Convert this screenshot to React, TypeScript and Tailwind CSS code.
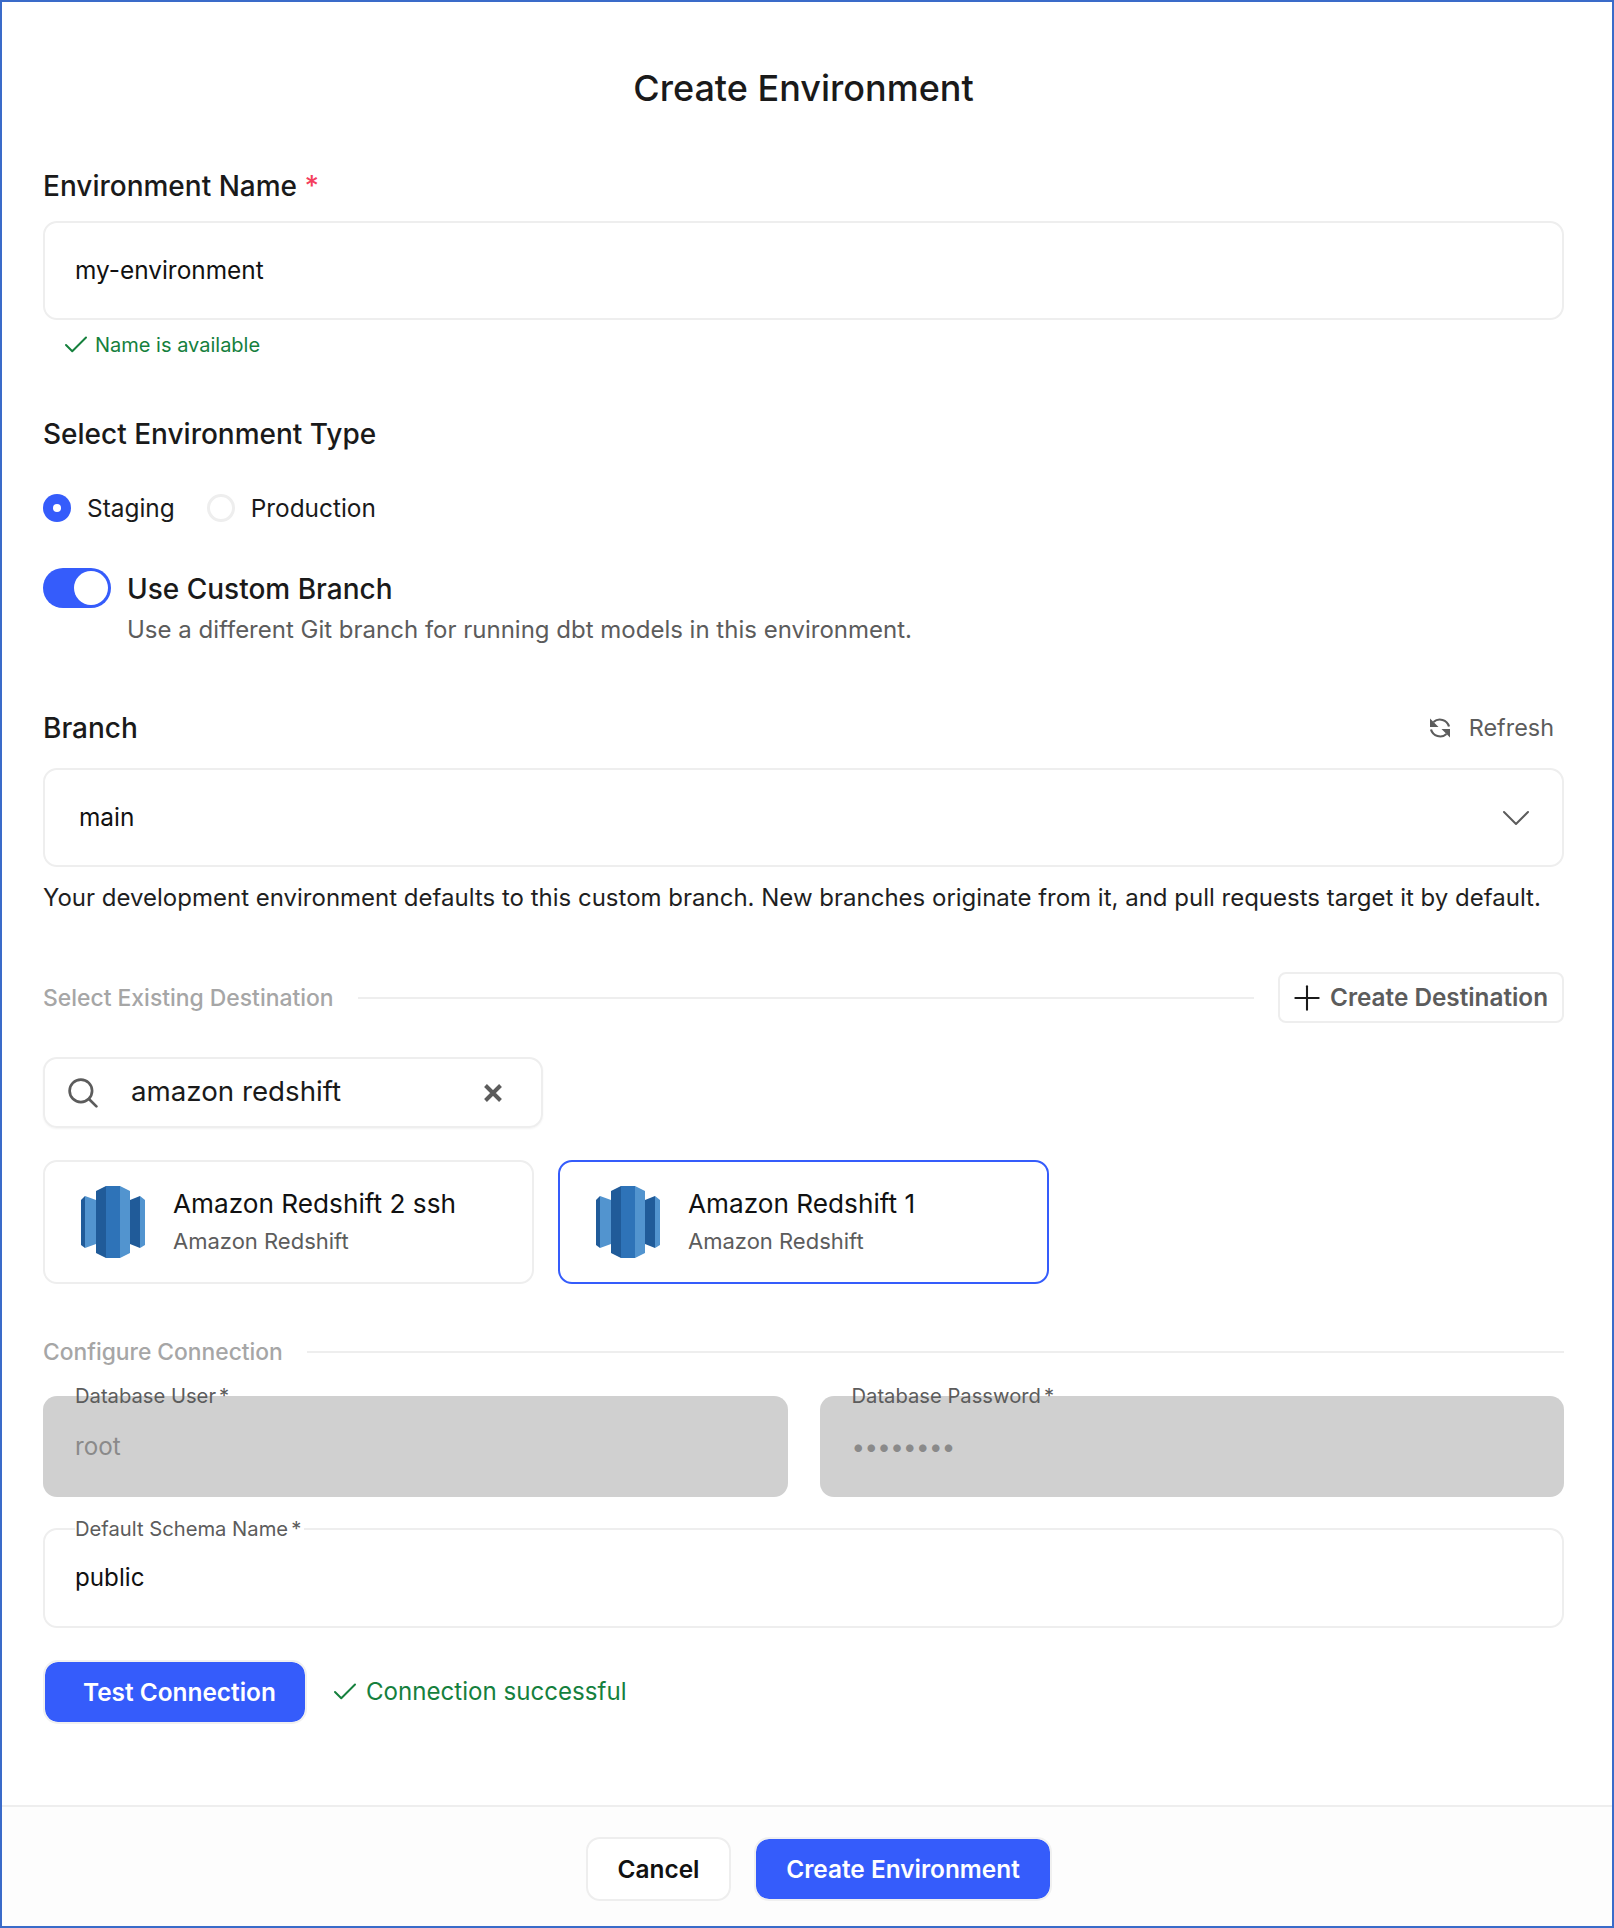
import { Check, ChevronDown, Plus } from "lucide-react";

function RedshiftLogo() {
  return (
    <svg className="h-[72px] w-[66px] shrink-0" viewBox="0 0 64 72">
      <path fill="#205b99" d="M0 14l4-4v52l-4-3z" />
      <path fill="#5294cf" d="M4 10l11 4v44l-11 4z" />
      <path fill="#205b99" d="M15 5l10-5v72l-10-5z" />
      <path fill="#2e73b8" d="M25 0h14v72h-14z" />
      <path fill="#5294cf" d="M39 0l10 5v62l-10 5z" />
      <path fill="#205b99" d="M49 14l10-4v52l-10-4z" />
      <path fill="#5294cf" d="M59 10l5 4v45l-5 3z" />
    </svg>
  );
}

function RefreshIcon() {
  return (
    <svg className="mr-[17px] h-[24px] w-[24px] text-[#5c5c5c]" viewBox="0 0 24 24" fill="none" stroke="currentColor" strokeWidth={2.2}>
      <path d="M21 10.5A9.5 9.5 0 0 0 5.5 6" />
      <path d="M3 13.5A9.5 9.5 0 0 0 18.5 18" />
      <path fill="currentColor" stroke="none" d="M2 2.5v8.5h8.5z" />
      <path fill="currentColor" stroke="none" d="M22 21.5v-8.5h-8.5z" />
    </svg>
  );
}

function SearchIcon() {
  return (
    <svg className="h-[30px] w-[30px] shrink-0 text-[#5c5c5c]" viewBox="0 0 28 28" fill="none" stroke="currentColor" strokeWidth={2.5} strokeLinecap="round">
      <circle cx="12" cy="12" r="10.5" />
      <path d="M20 20l6.5 6.5" />
    </svg>
  );
}

function CloseIcon() {
  return (
    <svg className="h-[30px] w-[30px] shrink-0 text-[#5c5c5c]" viewBox="0 0 24 24" fill="none" stroke="currentColor" strokeWidth={3.2}>
      <path d="M6 6l12 12M18 6L6 18" />
    </svg>
  );
}

function DestinationCard({ name, selected }: { name: string; selected?: boolean }) {
  return (
    <div
      className={
        "flex h-[124px] w-[491px] items-center rounded-[14px] border-2 pl-[35px] " +
        (selected ? "border-[#355cfb]" : "border-[#eeeeee]")
      }
    >
      <RedshiftLogo />
      <div className="ml-[27px] pb-[2px]">
        <div className="text-[26.2px] leading-[36px] text-[#111111]">{name}</div>
        <div className="mt-[3px] text-[22px] leading-[32px] text-[#5c5c5c]">Amazon Redshift</div>
      </div>
    </div>
  );
}

function FloatingField({
  label,
  value,
  disabled,
  className,
  masked,
}: {
  label: string;
  value: string;
  disabled?: boolean;
  className?: string;
  masked?: boolean;
}) {
  return (
    <div
      className={
        "relative flex items-center rounded-[14px] " +
        (disabled ? "bg-[#d0d0d0] pl-[32px] " : "border-2 border-[#eeeeee] pl-[30px] ") +
        className
      }
    >
      <span
        className={
          "absolute text-[20.2px] leading-[24px] text-[#5c5c5c] " +
          (disabled ? "-top-[12px] left-[32px]" : "-top-[13px] left-[30px] bg-white pr-[3px]")
        }
      >
        {label}
        <span className="ml-[3px]">*</span>
      </span>
      {masked ? (
        <span className="text-[24px] leading-[32px] tracking-[-0.6px] text-[#8a8a8a]">••••••••</span>
      ) : (
        <span className={"text-[24.2px] leading-[32px] " + (disabled ? "text-[#8a8a8a]" : "text-[#111111]")}>{value}</span>
      )}
    </div>
  );
}

export default function App() {
  return (
    <div className="flex h-[1928px] w-[1614px] flex-col border-2 border-[#3a6bc9] bg-white font-['Inter',sans-serif]">
      <div className="pt-[64px] pr-[48px] pl-[41px]">
        <h1 className="text-center text-[36px] leading-[44px] font-medium text-[#1a1a1a]">Create Environment</h1>

        <div className="mt-[58px] text-[28px] leading-[36px] font-medium text-[#1a1a1a]">
          Environment Name <span className="text-[#f43f5e]">*</span>
        </div>
        <div className="mt-[17px] flex h-[99px] items-center rounded-[14px] border-2 border-[#eeeeee] pb-[1px] pl-[30px] text-[24.4px] text-[#111111]">
          my-environment
        </div>
        <div className="mt-[11px] flex h-[28px] items-center pl-[18px] text-[20px] text-[#15803d]">
          <Check className="mr-[4px] h-[30px] w-[30px]" strokeWidth={1.6} />
          Name is available
        </div>

        <div className="mt-[57px] text-[28px] leading-[36px] font-medium text-[#1a1a1a]">Select Environment Type</div>
        <div className="mt-[40px] flex h-[32px] items-center text-[24.4px] text-[#1a1a1a]">
          <span className="flex h-[28px] w-[28px] items-center justify-center rounded-full bg-[#355cfb]">
            <span className="h-[8px] w-[8px] rounded-full bg-white" />
          </span>
          <span className="ml-[16px]">Staging</span>
          <span className="ml-[32px] h-[28px] w-[28px] rounded-full border-[3px] border-[#eeeeee]" />
          <span className="ml-[16px]">Production</span>
        </div>

        <div className="mt-[44px] flex items-start">
          <div className="flex h-[40px] w-[68px] items-center justify-end rounded-full bg-[#355cfb] pr-[3px]">
            <span className="h-[34px] w-[34px] rounded-full bg-white" />
          </div>
          <div className="ml-[16px] pt-[3px]">
            <div className="text-[28px] leading-[36px] font-medium text-[#1a1a1a]">Use Custom Branch</div>
            <div className="mt-[7px] text-[24px] leading-[32px] text-[#5c5c5c]">
              Use a different Git branch for running dbt models in this environment.
            </div>
          </div>
        </div>

        <div className="mt-[64px] flex h-[36px] items-center justify-between pr-[10px]">
          <span className="text-[28px] font-medium text-[#1a1a1a]">Branch</span>
          <span className="flex items-center text-[23.4px] text-[#5c5c5c]">
            <RefreshIcon />
            Refresh
          </span>
        </div>
        <div className="mt-[22px] flex h-[99px] items-center justify-between rounded-[14px] border-2 border-[#eeeeee] pr-[22px] pl-[34px] text-[24.4px] text-[#111111]">
          main
          <ChevronDown className="h-[48px] w-[48px] text-[#5c5c5c]" strokeWidth={1} />
        </div>
        <div className="mt-[15px] text-[24px] leading-[32px] text-[#1f1f1f]">
          Your development environment defaults to this custom branch. New branches originate from it, and pull requests target it by default.
        </div>

        <div className="mt-[58px] flex h-[51px] items-center">
          <span className="pt-[1px] text-[22.9px] font-medium text-[#a6a6a6]">Select Existing Destination</span>
          <span className="mx-[24px] h-[2px] flex-1 bg-[#eeeeee]" />
          <button className="flex h-[51px] w-[286px] items-center rounded-[8px] border-2 border-[#eeeeee] pl-[7px] text-[24.3px] font-semibold text-[#5c5c5c]">
            <Plus className="mr-[3px] h-[40px] w-[40px] text-[#1a1a1a]" strokeWidth={1.25} />
            Create Destination
          </button>
        </div>

        <div className="mt-[34px] flex h-[71px] w-[500px] items-center rounded-[14px] border-2 border-[#eeeeee] pr-[33px] pl-[23px] shadow-[0_1px_2px_rgba(0,0,0,0.05)]">
          <SearchIcon />
          <span className="ml-[33px] flex-1 pb-[2px] text-[27.7px] text-[#1a1a1a]">amazon redshift</span>
          <CloseIcon />
        </div>

        <div className="mt-[32px] flex gap-[24px]">
          <DestinationCard name="Amazon Redshift 2 ssh" />
          <DestinationCard name="Amazon Redshift 1" selected />
        </div>

        <div className="mt-[54px] flex h-[28px] items-center">
          <span className="pt-[1px] text-[22.8px] font-medium text-[#a6a6a6]">Configure Connection</span>
          <span className="ml-[24px] h-[2px] flex-1 bg-[#eeeeee]" />
        </div>

        <div className="mt-[30px] grid grid-cols-2 gap-[32px]">
          <FloatingField className="h-[101px]" label="Database User" value="root" disabled />
          <FloatingField className="h-[101px]" label="Database Password" value="" disabled masked />
        </div>
        <FloatingField className="mt-[31px] h-[100px]" label="Default Schema Name" value="public" />

        <div className="mt-[32px] flex items-center">
          <button className="flex h-[64px] w-[264px] items-center rounded-[15px] border-2 border-[#f0f0f0] bg-[#355cfb] bg-clip-padding pl-[38px] text-[24.4px] font-semibold text-white">
            Test Connection
          </button>
          <Check className="mr-[6px] ml-[23px] h-[30px] w-[30px] text-[#15803d]" strokeWidth={1.6} />
          <span className="text-[24.1px] text-[#15803d]">Connection successful</span>
        </div>
      </div>

      <div className="mt-auto flex h-[121px] justify-center gap-[23px] border-t-2 border-[#eeeeee] bg-[#fdfdfd] pt-[30px] pl-[24px]">
        <button className="h-[64px] w-[145px] rounded-[14px] border-2 border-[#eeeeee] bg-white text-[24.4px] font-semibold text-[#111111]">
          Cancel
        </button>
        <button className="h-[64px] w-[298px] rounded-[15px] border-2 border-[#f0f0f0] bg-[#355cfb] bg-clip-padding text-[24.4px] font-semibold text-white">
          Create Environment
        </button>
      </div>
    </div>
  );
}
